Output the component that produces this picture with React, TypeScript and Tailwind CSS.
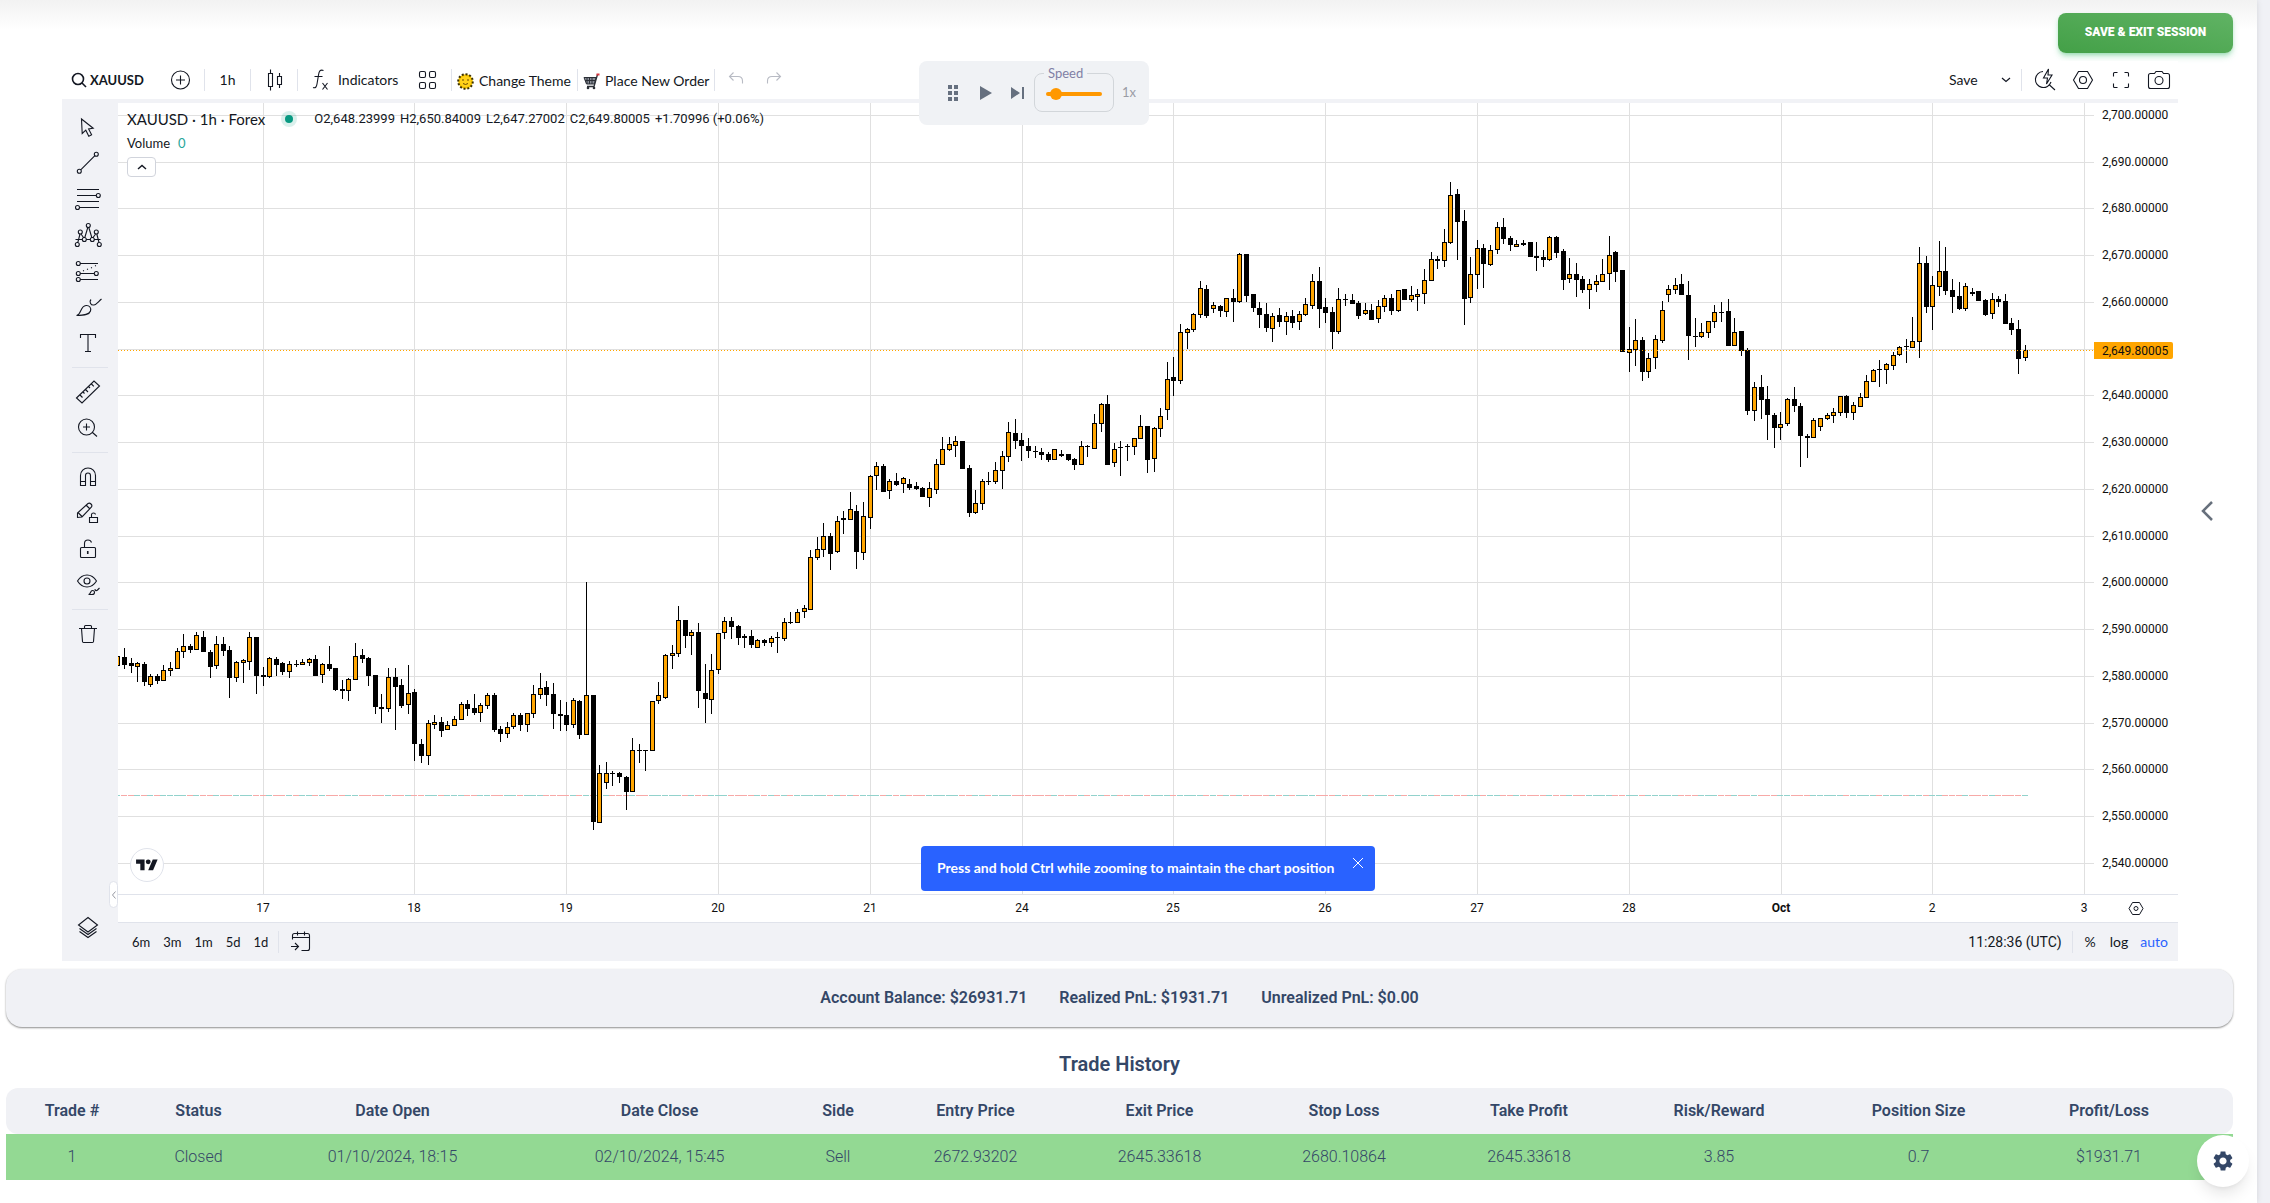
import React, { useState } from 'react';

// Each bar: direction, high, body top, body bottom, low (pixels below `base`)
const RUNS = [
  {
    base: 457,
    bars: `u 96 96 106 106|d 88 97 105 109|d 98 103 106 113|u 102 103 107 122|d 102 104 122 126|u 114 116 125 127|d 114 116 121 124|u 105 110 121 121|u 102 108 111 116|u 88 91 109 109
|u 74 86 92 98|d 84 86 90 93|u 72 75 90 90|d 71 77 92 92|d 90 92 107 118|u 76 84 106 109|d 77 84 91 96|d 86 90 118 138|u 101 102 118 122|u 99 100 103 123
|u 72 77 102 110|d 77 77 116 134|d 107 115 117 126|u 97 98 117 118|d 97 99 105 116|d 102 103 112 115|u 101 104 112 118|d 100 104 105 107|u 99 102 105 105|u 98 99 103 106
|d 95 99 116 116|u 103 104 115 123|d 86 104 109 111|d 108 108 130 131|d 120 129 131 139|u 118 119 131 141|u 83 96 120 120|d 89 95 99 103|d 97 98 116 126|d 115 115 147 154
|d 134 147 149 163|u 108 117 149 152|d 108 117 127 170|d 119 125 146 148|u 105 133 145 154|d 129 132 184 201|d 179 184 196 203|u 160 163 196 205|u 155 162 165 169|d 157 162 171 177
|u 161 165 170 170|u 156 159 166 166|u 142 144 160 160|d 140 144 149 156|d 134 148 153 155|u 143 145 153 162|u 133 135 146 149|d 133 135 170 172|d 166 169 174 182|u 162 167 174 178
|u 153 155 167 169|d 153 155 165 171|u 153 153 165 172|u 125 134 154 158|u 113 128 135 139|d 121 127 135 146|d 123 134 154 169|d 140 154 156 171|d 142 155 165 171|u 138 140 165 168
|d 140 141 175 179|u 22 135 175 175|d 135 135 262 270|u 205 213 263 263|u 202 213 223 229`,
  },
  {
    base: 317,
    bars: `d 351 353 354 366|d 352 353 357 363|d 356 357 372 390|u 318 330 372 372|d 324 330 331 343|d 330 330 331 351|u 281 281 331 331|u 262 275 281 284|u 234 235 278 279|u 225 233 236 249
|u 186 200 234 237|d 200 200 216 228|u 210 212 216 235|d 203 212 271 288|d 244 273 279 303|u 234 250 280 294|u 213 213 250 254|u 197 201 213 219|d 197 201 207 219|d 205 206 218 225
|d 214 216 218 228|d 210 216 225 228|u 219 220 228 228|d 219 220 223 226|u 216 218 223 227|d 212 217 218 233|u 198 202 219 221|d 192 202 203 204|u 189 192 203 203|u 185 188 192 198
|u 130 137 190 190|u 117 129 138 140|u 103 116 130 137|d 113 116 134 150|u 96 101 132 133|d 91 98 100 114|u 72 89 100 100|d 85 91 132 149|u 82 96 133 140|u 55 56 98 109
|u 42 46 56 70|d 44 46 72 72|u 59 61 71 79|d 53 61 65 66|u 57 58 64 73|d 59 64 68 70|d 62 66 69 70|d 67 68 77 77|u 62 68 78 87|u 39 44 70 74
|u 17 29 45 45|u 17 24 30 31|u 16 21 26 37|d 21 21 49 49|d 45 48 93 97|u 70 83 93 94|u 59 61 84 90|d 52 61 62 65|u 42 50 62 64|u 31 36 51 69
|u 2 12 37 42|d -1 13 21 29|d 13 20 26 41`,
  },
  {
    base: 117,
    bars: `d 218 226 231 238|d 226 231 232 238|d 228 232 235 240|d 232 234 240 242|u 229 229 240 240|d 230 234 236 237|d 234 234 240 241|d 238 239 245 250|u 221 226 245 245|d 225 226 227 237
|u 194 203 229 229|u 183 184 204 212|d 175 184 245 245|u 223 229 243 247|d 221 227 228 256|d 224 226 227 241|u 218 218 227 235|u 195 206 219 219|d 206 206 240 253|u 207 208 239 252
|u 188 196 209 217|u 142 159 190 200|d 137 157 161 176|u 104 112 161 164|u 108 109 113 129|u 93 94 110 112|u 61 68 95 98|d 65 69 96 98|u 82 85 89 93|d 85 86 91 97
|u 78 78 92 97|d 69 78 82 102|u 33 34 82 83|d 34 34 76 82|d 74 74 88 92|d 82 88 95 108|d 83 94 108 112|u 93 96 109 122|d 88 95 102 107|u 92 96 102 115
|d 90 96 103 108|u 91 94 102 110|u 78 84 95 96|u 54 61 86 89|d 47 61 89 108|d 78 87 93 103|d 87 92 112 129|u 68 79 112 114|d 74 79 80 86|d 74 80 84 84
|d 81 83 96 99|u 83 90 94 95|d 84 90 100 100|u 80 86 99 103|u 75 78 87 92|d 74 78 91 95|u 70 70 91 92|d 69 69 80 80|u 66 75 80 82|u 69 74 77 91
|u 49 60 74 84|u 32 39 61 61|d 36 39 41 49`,
  },
  {
    base: 57,
    bars: `u 69 82 101 107|u 22 35 83 84|d 29 34 62 100|d 50 61 139 165|u 97 114 138 143|u 80 88 115 129|d 84 88 104 128|u 85 90 105 106|u 62 67 90 94|d 58 67 79 84
|d 76 78 85 91|u 80 84 87 87|d 80 83 85 86|d 82 82 97 97|d 82 96 98 111|d 90 97 100 107|u 76 77 100 101|d 76 77 93 98|d 89 91 120 130|u 98 114 119 123
|d 103 114 120 137|d 116 119 130 133|u 119 124 130 149|u 115 121 125 132|u 99 114 122 122|u 76 95 114 130|d 91 92 112 122|d 110 110 192 192|u 167 189 193 212|u 159 180 190 206
|d 177 180 212 221|u 193 198 212 218|u 175 179 198 209|u 141 150 181 183|u 125 129 135 142|u 118 125 130 134|d 114 124 135 135|d 121 135 176 200|d 158 176 177 187|u 163 172 177 178
|u 161 161 173 178|u 145 152 162 168|d 142 152 153 162|d 139 151 186 186|u 158 172 186 186|d 171 171 191 196|d 188 190 251 255|u 222 227 251 261|d 215 227 240 259|d 226 239 255 280
|d 253 255 268 288|u 252 264 268 280|u 238 239 264 266|d 227 239 246 252`,
  },
  {
    base: 117,
    bars: `d 183 186 216 247|d 214 216 218 238|u 198 200 218 218|u 198 198 207 211|u 193 195 199 200|u 188 192 196 203|u 176 176 193 196|d 175 176 193 198|u 182 185 193 200|u 173 177 187 187
|u 155 161 178 178|u 149 150 162 162|d 140 149 150 167|u 143 144 150 164|u 132 135 146 150|u 126 127 135 136|d 119 126 127 143|u 97 121 128 128|u 27 43 122 138|d 36 43 87 93
|u 56 65 87 110|u 21 51 67 76|d 27 51 71 75|d 59 70 77 93|d 62 76 89 90|u 63 66 89 91|d 68 72 74 76|d 71 71 81 81|d 79 80 95 96|u 73 79 94 99
|d 76 79 82 87|d 74 81 104 104|d 98 103 110 115|d 100 109 139 154|u 125 130 138 141`,
  },
];

const BARS = RUNS.flatMap(({ base, bars }) =>
  bars.split('|').map((b) => {
    const [dir, ...n] = b.trim().split(' ');
    const [high, top, bottom, low] = n.map((v) => Number(v) + base);
    return { up: dir === 'u', high, top, bottom, low };
  })
);

const PRICES = Array.from({ length: 17 }, (_, i) => 2700 - i * 10);
const DAYS = ['17', '18', '19', '20', '21', '24', '25', '26', '27', '28', 'Oct', '2', '3'];

const barX = (i: number) => Math.floor(i * 6.6 - 0.2);
const priceY = (i: number) => Math.round(12 + i * 46.75 - 0.1);
const dayX = (i: number) => Math.floor(145 + i * 151.8);

function Chart() {
  return (
    <svg viewBox="0 0 2060 820" className="block w-full h-auto bg-white" role="img" aria-label="XAUUSD 1h candles">
      <g shapeRendering="crispEdges">
        {PRICES.map((p, i) => (
          <rect key={p} x={0} y={priceY(i)} width={1976} height={1} fill="#e0e0e0" />
        ))}
        {DAYS.map((d, i) => (
          <rect key={d} x={dayX(i)} y={0} width={1} height={791} fill="#e0e0e0" />
        ))}
        {BARS.map((b, i) => (
          <rect key={i} x={barX(i) - 3} y={692} width={6} height={1} fill={b.up ? '#92d2cc' : '#f7a9a7'} />
        ))}
        {BARS.map((b, i) => (
          <g key={i}>
            <rect x={barX(i)} y={b.high} width={1} height={b.low - b.high} />
            <rect x={barX(i) - 2} y={b.top} width={5} height={b.bottom - b.top} />
            {b.up && <rect x={barX(i) - 1} y={b.top + 1} width={3} height={b.bottom - b.top - 2} fill="#ffa500" />}
          </g>
        ))}
        <line x1={0} y1={247.5} x2={1976} y2={247.5} stroke="#ffa500" strokeDasharray="1 2" />
        <rect x={0} y={791} width={2060} height={1} fill="#e0e3eb" />
        <rect x={0} y={819} width={2060} height={1} fill="#e0e3eb" />
      </g>
      <g fontFamily="Roboto, sans-serif" fontSize={12} fill="#0f0f0f">
        {PRICES.filter((p) => p !== 2650).map((p) => (
          <text key={p} x={1984} y={priceY((2700 - p) / 10) + 4}>
            {`${p.toLocaleString('en-US')}.00000`}
          </text>
        ))}
        <path d="M1976 239h77q2 0 2 2v13q0 2-2 2h-77z" fill="#ffa500" />
        <text x={1984} y={252}>2,649.80005</text>
        {DAYS.map((d, i) => (
          <text key={d} x={dayX(i)} y={809} textAnchor="middle" fontWeight={d === 'Oct' ? 700 : 400}>{d}</text>
        ))}
      </g>
      <g fill="none" stroke="#131722">
        <path d="M2014.500 799.500h7l3.500 6-3.500 6h-7l-3.500-6z" />
        <circle cx={2018} cy={805.500} r={2} />
      </g>
    </svg>
  );
}

function Icon({ children, size = 28 }: { children: React.ReactNode; size?: number }) {
  return (
    <svg width={size} height={size} viewBox="0 0 28 28" fill="none" stroke="currentColor" strokeWidth="1.1" className="shrink-0">
      {children}
    </svg>
  );
}

const HexIcon = () => (
  <Icon>
    <path d="M9.500 5.500h9l5 8.500-5 8.500h-9l-5-8.500z" />
    <circle cx="14" cy="14" r="3.500" />
  </Icon>
);

const TOOLS = [
  [
    { name: 'Cursor', d: 'M7.500 6l.7 14.500 3.600-3.300 3 6 2.800-1.400-3-5.800 4.600-.8z' },
    { name: 'Trend line', d: 'M6.700 20.900L20.900 6.700M7.300 22.300a2 2 0 1 1-4 0 2 2 0 0 1 4 0zM24.300 5.300a2 2 0 1 1-4 0 2 2 0 0 1 4 0z' },
    { name: 'Fib retracement', d: 'M3 4.500h22M3 10.500h19.300M3 16.500h22M5.700 22.500H25M26.300 10.500a2 2 0 1 1-4 0 2 2 0 0 1 4 0zM5.500 22.500a2 2 0 1 1-4 0 2 2 0 0 1 4 0z' },
    { name: 'Patterns', d: 'M1.500 18.500h7M12.300 18.500h4M20.300 18.500h6.200M3.800 21.500L6 13M7 13l2.700 3.700M10.800 16.500L13.800 6.500M14.800 6.500l3 10M18.900 16.700L21.600 13M22.800 13l2.200 8.500M16.300 4.500a2 2 0 1 1-4 0 2 2 0 0 1 4 0zM8.300 11a2 2 0 1 1-4 0 2 2 0 0 1 4 0zM24.300 11a2 2 0 1 1-4 0 2 2 0 0 1 4 0zM12.300 18.500a2 2 0 1 1-4 0 2 2 0 0 1 4 0zM20.300 18.500a2 2 0 1 1-4 0 2 2 0 0 1 4 0zM5.300 23.500a2 2 0 1 1-4 0 2 2 0 0 1 4 0zM27.300 23.500a2 2 0 1 1-4 0 2 2 0 0 1 4 0z' },
    { name: 'Forecast', d: 'M6.300 6.500H24M6.300 16.500h14M6.300 22.500H24M6.300 6.500a2 2 0 1 1-4 0 2 2 0 0 1 4 0zM6.300 16.500a2 2 0 1 1-4 0 2 2 0 0 1 4 0zM24.300 16.500a2 2 0 1 1-4 0 2 2 0 0 1 4 0zM6.300 22.500a2 2 0 1 1-4 0 2 2 0 0 1 4 0zM9 14l1-.4M13 12.500l1-.4M17 11l1-.4M21 9l1-.4' },
    { name: 'Brush', d: 'M2.500 22.500c5-.5 3.500-9.500 9.500-10 3.500-.3 5.500 2.500 4.500 5.500-1.200 3.500-5 4.500-14 4.500zM17 6.500c-2 2-.5 6 3 5.500 2.500-.4 4.500-3.500 7.500-6' },
    { name: 'Text', d: 'M6.500 9V5.500h15V9M14 5.500v17M11 22.500h6' },
  ],
  [
    { name: 'Measure', d: 'M2.500 20L20 3l5.500 5L8 25zM6 17l2.500 2.500M9 14l1.500 1.500M11.500 11.500L14 14M14.500 8.500L16 10M17.500 6l2.300 2.300' },
    { name: 'Zoom in', d: 'M20.500 13a8 8 0 1 1-16 0 8 8 0 0 1 16 0zM18.500 18.500l4.500 4M9 13h7M12.500 9.500v7' },
  ],
  [
    { name: 'Magnet', d: 'M6.500 22.500v-10a7.500 7.500 0 0 1 15 0v10h-5v-10a2.500 2.500 0 0 0-5 0v10zM6.500 18.500h5M16.500 18.500h5' },
    { name: 'Stay in drawing mode', d: 'M3.500 18.500v-4.500L14 4.500q1.500-1 3 .5t.5 3L8 18zM4 13.500l4.500 4.500M12 6l4 4M15.500 18.500h8v5h-8zM17.500 18.500v-3q.2-1.500 2-1.500t2 1.500' },
    { name: 'Lock drawings', d: 'M6.500 13.500q0-1 1-1h13q1 0 1 1v8q0 1-1 1h-13q-1 0-1-1zM10.500 12.500V8.500q0-3.500 3.500-3.500 2.800 0 3.500 2.500M14 16v3M13.500 16v3' },
    { name: 'Hide drawings', d: 'M3.500 10C6 6 9.500 4 13 4s7 2 9.500 6c-2.500 4-6 6-9.500 6s-7-2-9.500-6zM16 10a3 3 0 1 1-6 0 3 3 0 0 1 6 0zM14.500 23.500c2.500 0 1.500-4 4-4s3 4-.5 4zM21 18c0 2 1.500 2 2.500 1l2-2' },
  ],
  [{ name: 'Remove', d: 'M5 8.500h18M10.500 8V6.500q0-1 1-1h5q1 0 1 1V8M7.500 8.500l1 13q.1 1 1 1h9q.9 0 1-1l1-13' }],
];

function Sep() {
  return <div className="w-px h-[22px] bg-[#e0e3eb] shrink-0" />;
}

function TopBar() {
  const btn = 'flex items-center h-[38px] shrink-0';
  return (
    <div className="flex items-center h-[38px] bg-white text-[#131722] text-sm">
      <button className={`${btn} w-[94px] pl-2 font-bold text-[13px]`}>
        <svg width="20" height="20" viewBox="0 0 20 20" fill="none" stroke="currentColor" strokeWidth="1.600">
          <circle cx="8" cy="9" r="5.500" />
          <path d="M12 13l4 4" />
        </svg>
        XAUUSD
      </button>
      <button className={`${btn} w-12 justify-center`} aria-label="Compare">
        <Icon>
          <circle cx="14.500" cy="14" r="9" />
          <path d="M10 14h9M14.500 9.500v9" />
        </Icon>
      </button>
      <Sep />
      <button className={`${btn} w-[45px] justify-center`}>1h</button>
      <Sep />
      <button className={`${btn} w-[46px] justify-center`} aria-label="Chart style">
        <Icon>
          <path d="M8.500 7.500h4v13h-4zM10.500 3.500v4M10.500 20.500v4M17.500 10.500h4v8h-4zM19.500 7v3.500M19.500 18.500V22" />
        </Icon>
      </button>
      <Sep />
      <button className={`${btn} w-[106px] pl-3 gap-0`}>
        <Icon>
          <path d="M13.500 4.500c-3.500-1.200-4.500 1-5 4.500l-1.500 9c-.5 3-1.500 4.500-4 3.500M4.500 10.500h8M12.500 17l5 6.500M17.500 17l-5 6.500" />
        </Icon>
        Indicators
      </button>
      <button className={`${btn} w-[47px] justify-center`} aria-label="Templates">
        <Icon>
          <rect x="5.500" y="5.500" width="6" height="6" rx="1.500" />
          <rect x="15.500" y="5.500" width="6" height="6" rx="1.500" />
          <rect x="5.500" y="16.500" width="6" height="6" rx="1.500" />
          <rect x="15.500" y="16.500" width="6" height="6" rx="1.500" />
        </Icon>
      </button>
      <Sep />
      <button className={`${btn} w-[125px] pl-[5px] pt-0.5 gap-[5px]`}>
        <svg width="17" height="17" viewBox="0 0 17 17" className="shrink-0">
          <circle cx="8.500" cy="8.500" r="7.300" fill="#f5c400" stroke="#3a2f00" strokeWidth="2" strokeDasharray="2 1.800" />
          <circle cx="8.500" cy="8.500" r="5.500" fill="#ffd21a" />
          <path d="M6 6v2M11 6v2M6 10.500q2.500 2 5 0" stroke="#6b4a00" fill="none" />
        </svg>
        Change Theme
      </button>
      <Sep />
      <button className={`${btn} w-[136px] pl-[5px] pt-0.5 gap-[5px]`}>
        <svg width="17" height="17" viewBox="0 0 17 17" fill="none" className="shrink-0">
          <path d="M1 4.500h12l-1.500 6.500h-8z" fill="#8a8f98" stroke="#2b2f36" />
          <path d="M4 5v6M6.500 5v6M9 5v6M2 7.500h10" stroke="#2b2f36" />
          <path d="M14.500 1.500l-3.500 12H4" stroke="#2b2f36" strokeWidth="1.300" />
          <path d="M13.500 1.500h3" stroke="#d9363e" strokeWidth="2" />
          <circle cx="5" cy="15" r="1.300" fill="#2b2f36" />
          <circle cx="11" cy="15" r="1.300" fill="#2b2f36" />
        </svg>
        Place New Order
      </button>
      <Sep />
      <button className={`${btn} w-[42px] justify-center text-[#b8bbc4]`} aria-label="Undo">
        <Icon>
          <path d="M8 10.500h8q4.500 0 4.500 4.500v2.500M11.500 6.500l-4 4 4 4" />
        </Icon>
      </button>
      <button className={`${btn} w-[34px] justify-center text-[#b8bbc4]`} aria-label="Redo">
        <Icon>
          <path d="M20 10.500h-8q-4.500 0-4.500 4.500v2.500M16.500 6.500l4 4-4 4" />
        </Icon>
      </button>
      <div className="flex-1" />
      <button className={`${btn} w-[52px] font-normal`}>Save</button>
      <button className={`${btn} w-[18px] mr-[2px]`} aria-label="Save options">
        <svg width="10" height="6" viewBox="0 0 10 6" fill="none" stroke="currentColor" strokeWidth="1.200">
          <path d="M1 1l4 3.500L9 1" />
        </svg>
      </button>
      <Sep />
      <button className={`${btn} w-[42px] pl-[9px]`} aria-label="Quick search">
        <Icon>
          <path d="M12 5.500a8 8 0 1 0 8 10.500M18.500 19l5.500 5M17.500 3l-5 9h4l-1 6 5.500-9h-4z" />
        </Icon>
      </button>
      <button className={`${btn} w-[38px] justify-center`} aria-label="Settings"><HexIcon /></button>
      <button className={`${btn} w-[38px] justify-center`} aria-label="Fullscreen">
        <Icon>
          <path d="M6.500 10.500v-3q0-1 1-1h3M17.500 6.500h3q1 0 1 1v3M21.500 17.500v3q0 1-1 1h-3M10.500 21.500h-3q-1 0-1-1v-3" />
        </Icon>
      </button>
      <button className={`${btn} w-[38px] justify-center`} aria-label="Snapshot">
        <Icon>
          <path d="M9.500 7.500l1.500-2h6l1.500 2h4q2 0 2 2v11q0 2-2 2h-17q-2 0-2-2v-11q0-2 2-2z" />
          <circle cx="14" cy="14.500" r="4" />
        </Icon>
      </button>
    </div>
  );
}

function SideBar() {
  return (
    <div className="flex flex-col items-center w-14 pt-1.5 bg-[#f1f2f6] text-[#131722] shrink-0">
      {TOOLS.map((group, g) => (
        <React.Fragment key={g}>
          {g > 0 && <div className="w-9 h-px my-1.5 bg-[#e0e3eb]" />}
          {group.map((tool) => (
            <button key={tool.name} aria-label={tool.name} className="flex items-center justify-center w-14 h-9 pr-1">
              <Icon><path d={tool.d} /></Icon>
            </button>
          ))}
        </React.Fragment>
      ))}
      <button aria-label="Object tree" className="flex items-center justify-center w-14 h-9 pr-1 mt-auto mb-4">
        <Icon>
          <path d="M14 4.500l9.500 7.500-9.500 7-9.500-7zM5.500 15.500l8.500 6 8.500-6M5.500 18.500l8.500 6 8.500-6" />
        </Icon>
      </button>
    </div>
  );
}

function Player() {
  const [speed, setSpeed] = useState(1);
  return (
    <div className="absolute left-[857px] top-0 flex items-center w-[230px] h-16 pl-[26px] rounded-lg bg-[#f0f2f5] text-[#67748e]">
      <button aria-label="Move" className="w-[35px]">
        <svg width="16" height="18" viewBox="0 0 16 18" fill="#66707f">
          <path d="M3 1h4v4H3zM9 1h4v4H9zM3 7h4v4H3zM9 7h4v4H9zM3 13h4v4H3zM9 13h4v4H9z" />
        </svg>
      </button>
      <button aria-label="Play" className="w-[31px]">
        <svg width="14" height="16" viewBox="0 0 14 16" fill="#66707f"><path d="M0 1l12 7-12 7z" /></svg>
      </button>
      <button aria-label="Next bar" className="w-[23px]">
        <svg width="14" height="16" viewBox="0 0 14 16" fill="#66707f"><path d="M0 2l9 6-9 6zM11 2h2v12h-2z" /></svg>
      </button>
      <fieldset className="w-20 h-[46px] -mt-2 rounded-lg border border-[#d2d6da] px-[11px]">
        <legend className="-ml-0.5 px-1 text-[13px] leading-[14px] text-[#8080a5]">
          <label htmlFor="speed">Speed</label>
        </legend>
        <input
          id="speed"
          type="range"
          min={0}
          max={10}
          step={1}
          value={speed}
          onChange={(e) => setSpeed(Number(e.target.value))}
          className="block w-14 h-1 mt-3 rounded-full appearance-none bg-[#ff9800] [&::-webkit-slider-thumb]:appearance-none [&::-webkit-slider-thumb]:size-3 [&::-webkit-slider-thumb]:rounded-full [&::-webkit-slider-thumb]:bg-[#ff9800]"
        />
      </fieldset>
      <span className="ml-2 text-[13px] text-[#9a9ca5]">{speed}x</span>
    </div>
  );
}

function Legend() {
  return (
    <div className="absolute left-[9px] top-1.5 text-[#131722]">
      <div className="flex items-center h-5">
        <span className="text-[15px]">XAUUSD · 1h · Forex</span>
        <span className="flex items-center justify-center size-4 ml-4 mr-[17px] rounded-full bg-[#089981]/15">
          <span className="size-2 rounded-full bg-[#089981]" />
        </span>
        <span className="flex gap-[5px] font-[Roboto] text-[13px]">
          <span>O2,648.23999</span>
          <span>H2,650.84009</span>
          <span>L2,647.27002</span>
          <span>C2,649.80005</span>
          <span>+1.70996 (+0.06%)</span>
        </span>
      </div>
      <div className="flex items-center h-6 gap-2 text-[13px] mt-[3px]">
        Volume <span className="text-[#26a69a]">0</span>
      </div>
      <button aria-label="Collapse legend" className="flex items-center justify-center w-[29px] h-5 mt-[1px] bg-white border border-[#d1d4dc] rounded-sm">
        <svg width="10" height="6" viewBox="0 0 10 6" fill="none" stroke="currentColor" strokeWidth="1.400">
          <path d="M1 5l4-3.500L9 5" />
        </svg>
      </button>
    </div>
  );
}

function BottomBar() {
  return (
    <div className="flex items-center h-[38px] pl-3.5 pr-2.5 bg-[#f1f2f6] text-[#131722] text-sm">
      <div className="flex gap-[13px] mr-2.5 text-[13px]">
        {['6m', '3m', '1m', '5d', '1d'].map((r) => (
          <button key={r}>{r}</button>
        ))}
      </div>
      <Sep />
      <button aria-label="Go to date" className="ml-2">
        <Icon>
          <path d="M5.500 11.500V7.500q0-2 2-2h13q2 0 2 2v13q0 2-2 2h-6M5.500 9.500h17M10.500 3.500v4M17.500 3.500v4M4 18.500h7M8 15l3.500 3.500L8 22" />
        </Icon>
      </button>
      <div className="flex-1" />
      <button className="mr-2.5 font-[Roboto]">11:28:36 (UTC)</button>
      <Sep />
      <button className="ml-3 mr-3.5">%</button>
      <button className="mr-3">log</button>
      <button className="text-[#2962ff]">auto</button>
    </div>
  );
}

const COLUMNS = [
  { label: 'Trade #', value: '1', width: 'w-[132px]' },
  { label: 'Status', value: 'Closed', width: 'w-[121px]' },
  { label: 'Date Open', value: '01/10/2024, 18:15', width: 'w-[267px]' },
  { label: 'Date Close', value: '02/10/2024, 15:45', width: 'w-[267px]' },
  { label: 'Side', value: 'Sell', width: 'w-[90px]' },
  { label: 'Entry Price', value: '2672.93202', width: 'w-[185px]' },
  { label: 'Exit Price', value: '2645.33618', width: 'w-[183px]' },
  { label: 'Stop Loss', value: '2680.10864', width: 'w-[186px]' },
  { label: 'Take Profit', value: '2645.33618', width: 'w-[184px]' },
  { label: 'Risk/Reward', value: '3.85', width: 'w-[196px]' },
  { label: 'Position Size', value: '0.7', width: 'w-[203px]' },
  { label: 'Profit/Loss', value: '$1931.71', width: 'w-[178px]' },
  { label: '', value: '', width: 'w-[35px]' },
];

function TradeHistory() {
  return (
    <section>
      <h2 className="mt-[22px] mb-[9px] text-center text-xl leading-[30px] font-semibold">Trade History</h2>
      <table className="w-full table-fixed border-separate border-spacing-0 text-base text-center">
        <thead>
          <tr className="h-[46px]">
            {COLUMNS.map((c) => (
              <th key={c.label} className={`${c.width} bg-[#f0f1f5] font-semibold first:rounded-l-xl last:rounded-r-xl`}>{c.label}</th>
            ))}
          </tr>
        </thead>
        <tbody>
          <tr className="h-[46px] font-light bg-[#93d993]">
            {COLUMNS.map((c) => (
              <td key={c.label}>{c.value}</td>
            ))}
          </tr>
        </tbody>
      </table>
    </section>
  );
}

export default function App() {
  const [showHint, setShowHint] = useState(true);

  return (
    <div className="min-h-screen pr-[13px] bg-[#f0f1f6] font-[Roboto,sans-serif] text-[#344767]">
      <main className="relative min-h-screen pt-[13px] pl-1.5 pr-6 bg-white bg-linear-to-b from-[#f2f2f2] to-white to-[30px] shadow-[0_0_6px_rgba(0,0,0,0.12)]">
        <div className="flex justify-end">
          <button className="h-10 w-[175px] pb-0.5 rounded-lg bg-linear-to-tr from-[#43a047] to-[#60b364] text-xs font-black uppercase text-white shadow-md shadow-green-600/30">
            Save &amp; Exit Session
          </button>
        </div>

        <div className="relative mt-2 ml-14 mr-[55px] font-[Lato,sans-serif]">
          <TopBar />
          <div className="h-1 bg-[#f1f2f6]" />
          <div className="flex">
            <SideBar />
            <div className="flex-1 min-w-0">
              <div className="relative">
                <Chart />
                <Legend />
                <a href="#tradingview" aria-label="TradingView" className="absolute left-3 bottom-[41px] flex items-center justify-center size-[34px] rounded-full bg-white border border-[#e0e3eb]">
                  <svg width="22" height="17" viewBox="0 0 36 28" fill="#131722">
                    <path d="M14 22H7V11H0V4h14v18zM28 22h-8l7.500-18h8L28 22z" />
                    <circle cx="20" cy="8" r="4" />
                  </svg>
                </a>
                <button aria-label="Hide drawings toolbar" className="absolute -left-[9px] bottom-[15px] flex items-center justify-center w-[9px] h-[27px] rounded-full bg-white border border-[#e0e3eb]">
                  <svg width="4" height="8" viewBox="0 0 4 8" fill="none" stroke="#9598a1"><path d="M3.500.5L.5 4l3 3.500" /></svg>
                </button>
                {showHint && (
                  <div className="absolute left-[803px] bottom-8 flex items-center w-[454px] h-[45px] pl-4 pb-0.5 rounded-sm bg-[#2962ff] text-white text-sm font-bold">
                    <span className="flex-1 whitespace-nowrap">Press and hold Ctrl while zooming to maintain the chart position</span>
                    <button aria-label="Close" onClick={() => setShowHint(false)} className="mr-[11px] mb-2.5">
                      <svg width="12" height="12" viewBox="0 0 12 12" stroke="currentColor"><path d="M1 1l10 10M11 1L1 11" /></svg>
                    </button>
                  </div>
                )}
              </div>
              <BottomBar />
            </div>
          </div>
          <Player />
        </div>

        <button aria-label="Open panel" className="absolute right-[43px] top-[500px]">
          <svg width="14" height="22" viewBox="0 0 14 22" fill="none" stroke="#67707c" strokeWidth="2.500"><path d="M12 2L3 11l9 9" /></svg>
        </button>

        <section className="flex items-center justify-center gap-8 h-[58px] mt-2 rounded-2xl bg-[#f0f1f5] text-base font-semibold shadow-[0_1px_2px_rgba(0,0,0,0.45)]">
          <span>Account Balance: $26931.71</span>
          <span>Realized PnL: $1931.71</span>
          <span>Unrealized PnL: $0.00</span>
        </section>

        <TradeHistory />

        <button aria-label="Configure" className="fixed right-[21px] bottom-4 flex items-center justify-center size-[52px] rounded-full bg-white shadow-lg">
          <svg width="24" height="24" viewBox="0 0 24 24" fill="#344767">
            <path d="M19.140 12.940c.04-.3.06-.61.06-.94 0-.32-.02-.64-.07-.94l2.030-1.580c.18-.14.23-.41.12-.61l-1.920-3.320c-.12-.22-.37-.29-.59-.22l-2.390.96c-.5-.38-1.030-.7-1.620-.94l-.36-2.540c-.04-.24-.24-.41-.48-.41h-3.840c-.24 0-.43.17-.47.41l-.36 2.540c-.59.24-1.130.57-1.620.94l-2.390-.96c-.22-.08-.47 0-.59.22L2.740 8.870c-.12.21-.08.47.12.61l2.030 1.580c-.05.3-.09.63-.09.94s.02.64.07.94l-2.030 1.580c-.18.14-.23.41-.12.61l1.920 3.320c.12.22.37.29.59.22l2.390-.96c.5.38 1.030.7 1.620.94l.36 2.540c.05.24.24.41.48.41h3.840c.24 0 .44-.17.47-.41l.36-2.540c.59-.24 1.130-.56 1.620-.94l2.390.96c.22.08.47 0 .59-.22l1.920-3.320c.12-.22.07-.47-.12-.61l-2.010-1.580zM12 15.600c-1.980 0-3.600-1.620-3.600-3.600s1.620-3.600 3.600-3.600 3.600 1.620 3.600 3.600-1.620 3.600-3.600 3.600z" />
          </svg>
        </button>
      </main>
    </div>
  );
}
